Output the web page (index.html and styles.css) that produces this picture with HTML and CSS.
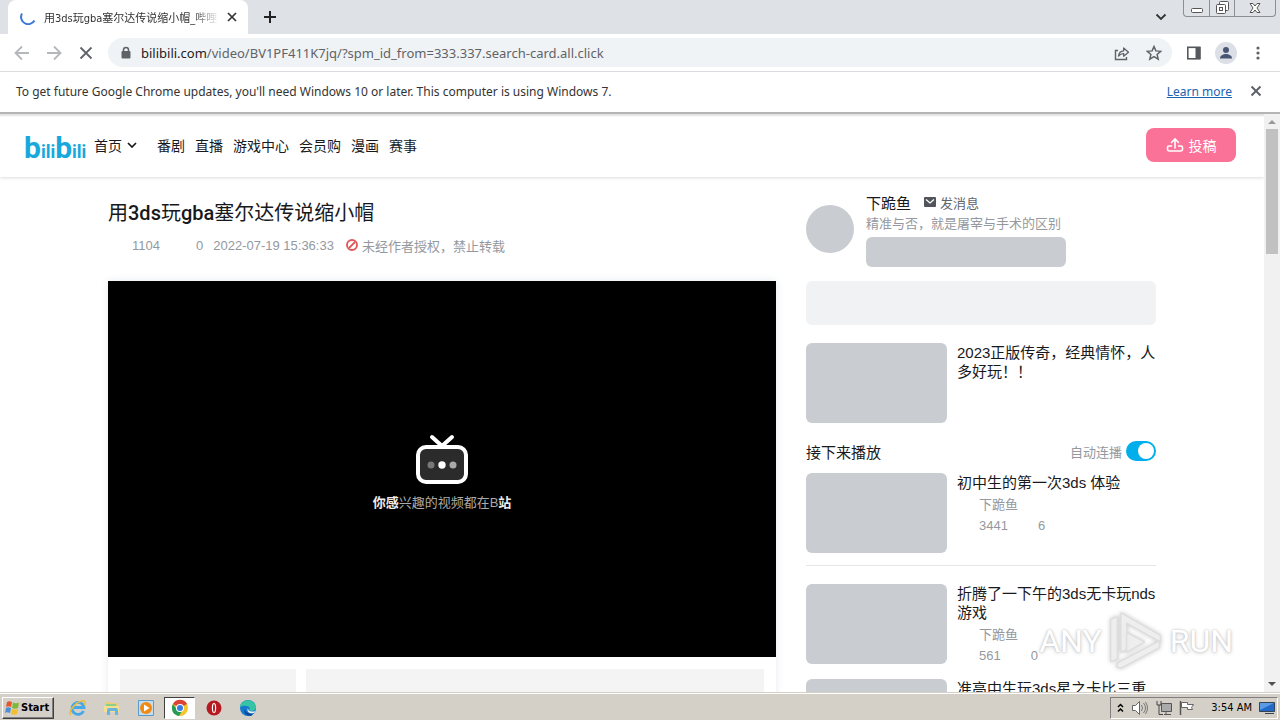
FILE: index.html
```
<!DOCTYPE html>
<html lang="zh-CN">
<head>
    <meta charset="UTF-8">
    <meta name="viewport" content="width=device-width, initial-scale=1.0">
    <title>用3ds玩gba塞尔达传说缩小帽_哔哩哔哩</title>
    <link rel="stylesheet" href="styles.css">
</head>
<body>
    <!-- Tab strip -->
    <div class="tab-strip">
        <div class="tab">
            <svg class="spinner" width="16" height="16" viewBox="0 0 16 16"><path d="M2 4.500A7 7 0 0 0 14.500 11.500" fill="none" stroke="#3b78d8" stroke-width="2"/></svg>
            <span class="tab-title">用3ds玩gba塞尔达传说缩小帽_哔哩</span>
            <button class="plain" aria-label="Close tab"><svg width="10" height="10" viewBox="0 0 10 10"><path d="M1 1l8 8M9 1l-8 8" stroke="#333" stroke-width="1.700"/></svg></button>
        </div>
        <button class="plain new-tab" aria-label="New tab"><svg width="12" height="12" viewBox="0 0 12 12"><path d="M6 0v12M0 6h12" stroke="#222" stroke-width="2"/></svg></button>
        <button class="plain tab-search" aria-label="Search tabs"><svg width="12" height="8" viewBox="0 0 12 8"><path d="M1.500 1.500L6 6l4.500-4.500" fill="none" stroke="#333" stroke-width="1.800"/></svg></button>
        <div class="window-buttons">
            <button class="plain" aria-label="Minimize"><svg width="14" height="14" viewBox="0 0 14 14"><rect x="1.500" y="7.500" width="11" height="4" rx="1" fill="#fff" stroke="#555"/></svg></button>
            <button class="plain" aria-label="Restore"><svg width="14" height="14" viewBox="0 0 14 14"><g fill="#fff" stroke="#555"><rect x="4.500" y=".5" width="9" height="9" rx="1"/><rect x="1.500" y="3.500" width="9" height="9" rx="1"/><rect x="4.500" y="6.500" width="3" height="3"/></g></svg></button>
            <button class="plain" aria-label="Close"><svg width="14" height="14" viewBox="0 0 14 14"><path d="M2 2.500h3l2 2.500 2-2.500h3L9 7l3 4.500H9L7 9l-2 2.500H2L5 7z" fill="#fff" stroke="#555"/></svg></button>
        </div>
    </div>

    <!-- Address bar -->
    <div class="toolbar">
        <button class="plain" aria-label="Back"><svg width="16" height="16" viewBox="0 0 16 16"><path d="M15 8H2M8 1.500L1.500 8 8 14.500" fill="none" stroke="#b5b7ba" stroke-width="1.800"/></svg></button>
        <button class="plain" aria-label="Forward"><svg width="16" height="16" viewBox="0 0 16 16"><path d="M1 8h13M8 1.500L14.500 8 8 14.500" fill="none" stroke="#b5b7ba" stroke-width="1.800"/></svg></button>
        <button class="plain" aria-label="Stop"><svg width="16" height="16" viewBox="0 0 16 16"><path d="M2.500 2.500l11 11M13.500 2.500l-11 11" stroke="#5f6368" stroke-width="1.800"/></svg></button>
        <div class="omnibox">
            <svg width="10" height="14" viewBox="0 0 10 14"><path d="M2.500 6V4a2.500 2.500 0 0 1 5 0v2" fill="none" stroke="#5f6368" stroke-width="1.500"/><rect x=".5" y="5" width="9" height="7.500" rx="1" fill="#5f6368"/></svg>
            <div class="url"><span>bilibili.com</span>/video/BV1PF411K7jq/?spm_id_from=333.337.search-card.all.click</div>
            <button class="plain" aria-label="Share"><svg width="16" height="16" viewBox="0 0 16 16"><path d="M4 5.500H1.500v9h11V12" fill="none" stroke="#5f6368" stroke-width="1.400"/><path d="M4.500 11c.4-3.500 2.300-5 5.200-5.200V3l4.800 4.200-4.800 4V8.700C7.500 8.600 6 9.200 4.500 11z" fill="none" stroke="#5f6368" stroke-width="1.300" stroke-linejoin="round"/></svg></button>
            <button class="plain" aria-label="Bookmark"><svg width="16" height="16" viewBox="0 0 16 16"><path d="M8 1.500l1.900 4.400 4.800.4-3.600 3.100 1.100 4.700L8 11.600l-4.200 2.500 1.100-4.700L1.300 6.300l4.800-.4z" fill="none" stroke="#5f6368" stroke-width="1.500"/></svg></button>
        </div>
        <button class="plain" aria-label="Side panel"><svg width="16" height="16" viewBox="0 0 16 16"><rect x="1.800" y="2.300" width="12" height="11.500" fill="none" stroke="#55585c" stroke-width="1.600"/><path d="M9.500 2h5v12h-5z" fill="#55585c"/></svg></button>
        <button class="plain profile" aria-label="Profile"><svg width="14" height="14" viewBox="0 0 14 14"><circle cx="7" cy="4" r="3" fill="#485674"/><path d="M1 12.500c0-6 12-6 12 0z" fill="#485674"/></svg></button>
        <button class="plain" aria-label="Menu"><svg width="4" height="16" viewBox="0 0 4 16"><g fill="#5f6368"><circle cx="2" cy="3" r="1.600"/><circle cx="2" cy="8" r="1.600"/><circle cx="2" cy="13" r="1.600"/></g></svg></button>
    </div>

    <div class="infobar">
        <span>To get future Google Chrome updates, you'll need Windows 10 or later. This computer is using Windows 7.</span>
        <a href="#">Learn more</a>
        <button class="plain" aria-label="Dismiss"><svg width="12" height="12" viewBox="0 0 12 12"><path d="M1.500 1.500l9 9M10.500 1.500l-9 9" stroke="#5f6368" stroke-width="2"/></svg></button>
    </div>

    <div class="viewport">
        <div class="page">
            <header class="site-header">
                <svg class="logo" width="62" height="32" viewBox="0 0 62 32" role="img" aria-label="bilibili"><text x="0" y="29" fill="#18a8dc"><tspan class="logo-tall">b</tspan>ili<tspan class="logo-tall">b</tspan>ili</text></svg>
                <nav>
                    <a class="home" href="#">首页 <svg width="10" height="6" viewBox="0 0 10 6"><path d="M1 1l4 4 4-4" fill="none" stroke="#18191c" stroke-width="1.700"/></svg></a>
                    <a href="#">番剧</a>
                    <a href="#">直播</a>
                    <a href="#">游戏中心</a>
                    <a href="#">会员购</a>
                    <a href="#">漫画</a>
                    <a href="#">赛事</a>
                </nav>
                <button class="upload">
                    <svg width="18" height="16" viewBox="0 0 18 16"><path d="M9 11V2.500M5.500 5.500L9 2l3.500 3.500M5.500 9H3a1.500 1.500 0 0 0-1.500 1.500v1.500A2 2 0 0 0 3.500 14h11a2 2 0 0 0 2-2v-1.500A1.500 1.500 0 0 0 15 9h-2.500" fill="none" stroke="#fff" stroke-width="1.600" stroke-linecap="round"/></svg>
                    投稿
                </button>
            </header>

            <div class="content">
                <main>
                    <h1>用<b>3ds</b>玩<b>gba</b>塞尔达传说缩小帽</h1>
                    <div class="video-meta">
                        <span class="views">1104</span>
                        <span class="comments">0</span>
                        <span class="date">2022-07-19 15:36:33</span>
                        <svg width="12" height="12" viewBox="0 0 12 12"><circle cx="6" cy="6" r="5" fill="none" stroke="#e0595c" stroke-width="1.900"/><path d="M3 9l6-6" stroke="#e0595c" stroke-width="1.800"/></svg>
                        <span>未经作者授权，禁止转载</span>
                    </div>
                    <div class="player">
                        <div class="screen">
                            <svg width="54" height="52" viewBox="0 0 54 52"><path d="M17 3l10 9L37 3" fill="none" stroke="#fff" stroke-width="4" stroke-linecap="round"/><rect x="3" y="13" width="48" height="35" rx="8" fill="#2b2b2b" stroke="#fff" stroke-width="4"/><circle cx="16" cy="31" r="3.500" fill="#777"/><circle cx="27" cy="31" r="3.700" fill="#fff"/><circle cx="38" cy="31" r="3.500" fill="#aaa"/></svg>
                            <p><b>你感</b>兴趣的视频都在B<b>站</b></p>
                        </div>
                        <div class="controls"><div class="viewers"></div><div class="danmaku-input"></div></div>
                    </div>
                </main>

                <aside>
                    <div class="author">
                        <div class="avatar"></div>
                        <div class="author-info">
                            <div class="author-name">
                                <a href="#">下跪鱼</a>
                                <a class="message" href="#"><svg width="12" height="12" viewBox="0 0 12 12"><rect y="1" width="12" height="10" rx="1" fill="#51555b"/><path d="M2 3.500l4 3.500 4-3.500" fill="none" stroke="#fff" stroke-width="1.200"/></svg>发消息</a>
                            </div>
                            <p>精准与否，就是屠宰与手术的区别</p>
                            <div class="follow"></div>
                        </div>
                    </div>
                    <div class="danmaku-list"></div>
                    <article class="card">
                        <div class="cover"></div>
                        <div><h3>2023正版传奇，经典情怀，人多好玩！！</h3></div>
                    </article>
                    <div class="next-head">
                        <h2>接下来播放</h2>
                        <label for="autoplay">自动连播</label>
                        <input class="switch" id="autoplay" type="checkbox" checked>
                    </div>
                    <article class="card first">
                        <div class="cover"></div>
                        <div>
                            <h3>初中生的第一次3ds 体验</h3>
                            <div class="card-meta">下跪鱼</div>
                            <div class="card-meta"><span>3441</span><span>6</span></div>
                        </div>
                    </article>
                    <article class="card">
                        <div class="cover"></div>
                        <div>
                            <h3>折腾了一下午的3ds无卡玩nds游戏</h3>
                            <div class="card-meta">下跪鱼</div>
                            <div class="card-meta"><span>561</span><span>0</span></div>
                        </div>
                    </article>
                    <article class="card">
                        <div class="cover"></div>
                        <div><h3>准高中生玩3ds星之卡比三重</h3></div>
                    </article>
                </aside>
            </div>
        </div>

        <div class="scrollbar">
            <svg width="8" height="4" viewBox="0 0 8 4"><path d="M0 4l4-4 4 4z" fill="#999"/></svg>
            <div class="thumb"></div>
            <svg class="down" width="8" height="4" viewBox="0 0 8 4"><path d="M0 0l4 4 4-4z" fill="#505050"/></svg>
        </div>

        <div class="watermark">
            <span>ANY</span>
            <svg width="58" height="62" viewBox="0 0 62 66"><g fill="#fff" fill-opacity=".6" stroke="#dedede" stroke-width="1.500" stroke-linejoin="round"><path d="M4 10l7-3v45l-7 3z"/><path d="M15 3l42 24v7L21 14v28l-6 3z"/><path d="M21 24l19 10-19 11z"/><path d="M12 56l44-23v7L15 62l-5-2z"/></g></svg>
            <span>RUN</span>
        </div>
    </div>

    <!-- Taskbar -->
    <footer class="taskbar">
        <button class="start">
            <svg width="16" height="16" viewBox="0 0 16 16"><path d="M3 2c2-1 3-1 5 0L7 7C5 6 4 6 2 7z" fill="#e8562a"/><path d="M9 2.500c2 1 4 1 6 0L14 8c-2 1-4 1-6 0z" fill="#7db83a"/><path d="M2 8c2-1 3-1 5 0l-1 5c-2-1-4-1-5 0z" fill="#4a8fd8"/><path d="M8 9c2 1 4 1 6 0l-1 5c-2 1-4 1-6 0z" fill="#f5bd2c"/></svg>
            Start
        </button>
        <button class="task" aria-label="Internet Explorer"><svg width="18" height="18" viewBox="0 0 18 18"><path d="M14.500 12a6 6 0 1 1 .5-3.500H5" fill="none" stroke="#45a9e8" stroke-width="2.800"/><path d="M2 16C-2 13 7 3 13 2c4-1 4 2 2 4" fill="none" stroke="#e9bd3d" stroke-width="1.500"/></svg></button>
        <button class="task" aria-label="Explorer"><svg width="18" height="18" viewBox="0 0 18 18"><path d="M2 3h5l1 1h7v9H2z" fill="#e9cf71"/><path d="M3 5h10v3H3z" fill="#8dcf88"/><path d="M1 7h15v6H1z" fill="#f5df91"/><path d="M4 16v-5q0-2 2-2h7q2 0 2 2v5h-3v-4H7v4z" fill="#68b5df"/></svg></button>
        <button class="task" aria-label="Media Player"><svg width="18" height="18" viewBox="0 0 18 18"><path d="M1.500 1.500h15v15h-15z" fill="#c4dcee" stroke="#5b9bcb"/><circle cx="9" cy="9" r="6" fill="#f18a13"/><path d="M7 5.500v7L12.500 9z" fill="#fff"/></svg></button>
        <button class="task active" aria-label="Chrome"><svg width="18" height="18" viewBox="0 0 18 18"><circle cx="9" cy="9" r="8" fill="#f7c52c"/><path d="M9 9L2 5a8 8 0 0 1 14 0z" fill="#dc4437"/><path d="M2 5a8 8 0 0 0 6 12l3.500-6H6z" fill="#249c58"/><path d="M9 5h7L14 4z" fill="#dc4437"/><circle cx="9" cy="9" r="4" fill="#fff"/><circle cx="9" cy="9" r="3" fill="#397de4"/></svg></button>
        <button class="task" aria-label="Opera"><svg width="18" height="18" viewBox="0 0 18 18"><circle cx="9" cy="9" r="7.500" fill="#b71920"/><ellipse cx="9" cy="9" rx="2.200" ry="5" fill="#fff"/><ellipse cx="9" cy="9" rx="1" ry="4" fill="#b71920"/></svg></button>
        <button class="task" aria-label="Edge"><svg width="18" height="18" viewBox="0 0 18 18"><circle cx="9" cy="9" r="8" fill="#1679cc"/><path d="M1 8c1-9 15-9 16 0 0 4-5 5-7 3 3-3-3-6-9-3z" fill="#35c4a6"/><path d="M6 10c1 5 6 5 9 4l-3 3C7 17 4 14 6 10z" fill="#0b4a9c"/><path d="M9 9c0 4 4 4 7 3l-1 2c-4 1-8-1-6-5z" fill="#e8f3f5"/></svg></button>
        <div class="tray">
            <svg width="7" height="10" viewBox="0 0 7 10"><path d="M1 4l2.500-2.500L6 4M1 8.500L3.500 6 6 8.500" fill="none" stroke="#000" stroke-width="1.500"/></svg>
            <svg width="18" height="16" viewBox="0 0 18 16"><path d="M1.500 5.500h3l4-4v13l-4-4h-3z" fill="#fff" stroke="#666"/><path d="M10.500 5q2 3 0 6M12.500 3q4 5 0 10M14.500 2q4 6 0 12" fill="none" stroke="#777"/></svg>
            <svg width="16" height="16" viewBox="0 0 16 16"><path d="M5.500 3.500h10v8h-10z" fill="#aaa" stroke="#555"/><path d="M8 14.500h7M10 12v2" stroke="#555"/><path d="M1 1v4h4V1M3 5v9.500h4" fill="none" stroke="#444"/></svg>
            <svg width="16" height="16" viewBox="0 0 16 16"><path d="M1.500 1v14" stroke="#555" stroke-width="1.500"/><path d="M2.500 2.500h6v2h6l-2 3 1 2H8.500v-2h-6z" fill="#fff" stroke="#666"/></svg>
            <time>3:54 AM</time>
            <svg width="16" height="14" viewBox="0 0 16 14"><path d="M.5 1.500h15v9H.5z" fill="#2269c9" stroke="#345"/><path d="M1 2h14L1 9z" fill="#5b9be5"/><path d="M6 12.500h9" stroke="#345"/></svg>
        </div>
    </footer>
</body>
</html>
```
FILE: styles.css
```
/* General */
* { box-sizing: border-box; }
body { margin: 0; height: 100vh; display: flex; flex-direction: column; overflow: hidden; background: #fff; font-family: "Liberation Sans", "Noto Sans CJK SC", sans-serif; color: #18191c; }
h1, h2, h3, p { margin: 0; font-weight: normal; }
a { color: inherit; text-decoration: none; }
svg { display: block; flex: none; }
button { font-family: inherit; cursor: pointer; }
.plain { display: flex; align-items: center; justify-content: center; flex: none; padding: 0; border: 0; background: none; }

/* Tab strip */
.tab-strip { display: flex; align-items: center; height: 34px; padding: 0 4px 0 8px; background: #dee1e6; font-family: "DejaVu Sans Condensed", "Noto Sans CJK SC", sans-serif; }
.tab { display: flex; align-items: center; gap: 8px; width: 240px; height: 34px; padding: 0 11px 0 12px; border-radius: 8px 8px 0 0; background: #fff; }
.tab-title { flex: 1; overflow: hidden; white-space: nowrap; font-size: 11px; color: #333; mask-image: linear-gradient(to right, #000 85%, transparent); }
.new-tab { margin-left: 16px; }
.tab-search { margin-left: auto; }
.window-buttons { display: flex; align-self: flex-start; height: 17px; margin-left: 16px; border: 1px solid #8b8e94; border-top: 0; border-radius: 0 0 4px 4px; }
.window-buttons button { width: 25px; }
.window-buttons button + button { border-left: 1px solid #8b8e94; }
.window-buttons button:last-child { width: 41px; }

/* Toolbar */
.toolbar { display: flex; align-items: center; gap: 16px; height: 38px; padding: 0 20px 0 14px; border-bottom: 1px solid #dadce0; }
.omnibox { flex: 1; display: flex; align-items: center; gap: 16px; height: 29px; margin: 0 -2px; padding: 0 10px 0 13px; border-radius: 15px; background: #f0f3f5; }
.url { flex: 1; margin-left: -6px; font-family: "Noto Sans", sans-serif; font-size: 13px; white-space: nowrap; color: #5f6368; }
.url span { color: #202124; }
.profile { width: 22px; height: 22px; margin: 0 3px 0 -3px; border-radius: 50%; background: #dcdfe5; }

/* Infobar */
.infobar { display: flex; align-items: center; height: 42px; padding: 0 18px 2px 16px; border-bottom: 2px solid #b5b5b5; font-family: "Noto Sans", sans-serif; font-size: 12px; color: #333; }
.infobar a { margin-left: auto; margin-right: 18px; color: #1a63b0; text-decoration: underline; }

/* Web page */
.viewport { position: relative; flex: 1; min-height: 0; display: flex; }
.page { flex: 1; overflow: hidden; }
.site-header { display: flex; align-items: center; height: 63px; padding: 0 28px 2px 24px; box-shadow: 0 1px 3px #dcdcdc, inset 0 4px 2px -2px #e2e2e2; }
.logo { margin-right: 8px; font-family: Roboto, sans-serif; font-size: 18px; font-weight: bold; }
.logo-tall { font-size: 30px; }
nav { display: flex; gap: 10px; font-size: 14px; }
.home { display: flex; align-items: center; gap: 5px; margin-right: 10px; }
.upload { display: flex; align-items: center; justify-content: center; gap: 5px; width: 90px; height: 34px; margin-left: auto; padding: 0; border: 0; border-radius: 8px; background: #fb7299; color: #fff; font-size: 14px; }

.content { display: flex; gap: 30px; max-width: 1048px; margin: 0 auto; }
main { flex: 1; padding-top: 22px; }
h1 { font-size: 20px; line-height: 28px; }
h1 b { font-family: Roboto, sans-serif; font-weight: 500; }
.video-meta { display: flex; align-items: center; height: 20px; margin: 8px 0 26px; padding-left: 24px; font-size: 13px; color: #9499a0; }
.video-meta svg { margin: 0 4px 0 12px; }
.comments { margin: 0 10px 0 36px; }
.player { box-shadow: 0 0 8px #e5e9ef; }
.screen { display: flex; flex-direction: column; align-items: center; justify-content: center; gap: 8px; aspect-ratio: 668 / 376; padding-top: 8px; background: #000; color: #aaa; font-size: 13px; line-height: 18px; }
.screen b { color: #eee; }
.controls { display: flex; gap: 10px; padding: 12px; }
.controls div { height: 34px; background: #f4f4f4; }
.viewers { width: 176px; }
.danmaku-input { flex: 1; }

/* Sidebar */
aside { width: 350px; padding-top: 14px; }
.author { display: flex; align-items: center; gap: 12px; height: 76px; }
.avatar { width: 48px; height: 48px; border-radius: 50%; background: #c9ccd0; }
.author-name { display: flex; align-items: center; gap: 13px; height: 22px; font-size: 15px; }
.message { display: flex; align-items: center; gap: 4px; font-size: 13px; color: #61666d; }
.author p { font-size: 13px; line-height: 22px; color: #9499a0; }
.follow { width: 200px; height: 30px; margin-top: 2px; border-radius: 6px; background: #c9ccd0; }
.danmaku-list { height: 44px; margin: 14px 0 18px; border-radius: 6px; background: #f0f2f4; }
.card { display: flex; gap: 10px; min-height: 80px; margin-bottom: 13px; }
.card.first { margin-bottom: 18px; padding-bottom: 12px; border-bottom: 1px solid #e3e5e7; }
.cover { flex: none; width: 141px; height: 80px; border-radius: 6px; background: #c9ccd0; }
h3 { margin-bottom: 2px; font-size: 15px; line-height: 19px; }
.card-meta { display: flex; gap: 30px; padding-left: 22px; font-size: 13px; line-height: 21px; color: #9499a0; }
.next-head { display: flex; align-items: center; height: 20px; margin: 18px 0 12px; }
h2 { flex: 1; font-size: 15px; }
.next-head label { font-size: 13px; color: #9499a0; }
.switch { appearance: none; display: flex; justify-content: flex-end; width: 30px; height: 20px; margin: 0 0 0 4px; padding: 2px; border-radius: 10px; background: #00aeec; }
.switch::before { content: ""; width: 16px; height: 16px; border-radius: 50%; background: #fff; }

/* Scrollbar */
.scrollbar { display: flex; flex-direction: column; align-items: center; width: 16px; padding: 6px 0; background: #f1f1f1; }
.thumb { width: 12px; height: 125px; margin-top: 5px; background: #c1c1c1; }
.down { margin-top: auto; }

/* Watermark over the page */
.watermark { position: absolute; right: 47px; bottom: 20px; display: flex; align-items: center; gap: 5px; font-family: Roboto, sans-serif; font-size: 32px; color: #fff; text-shadow: 0 0 2px #bbb, 0 1px 4px #ccc; }
.watermark svg { filter: drop-shadow(0 0 2px #bbb); }

/* Taskbar */
.taskbar { display: flex; align-items: center; height: 28px; padding: 2px 2px 0; border-top: 1px solid #d4d0c8; box-shadow: inset 0 1px #fff; background: #d4d0c8; font-family: "DejaVu Sans Condensed", sans-serif; font-size: 11px; color: #000; }
.start { display: flex; align-items: center; gap: 1px; width: 52px; height: 22px; margin-right: 8px; padding: 0 1px; border: 1px solid; border-color: #fff #404040 #404040 #fff; box-shadow: inset -1px -1px #808080; background: #d4d0c8; font-size: 11px; font-weight: bold; }
.task { display: flex; align-items: center; justify-content: center; width: 31px; height: 22px; margin-right: 3px; padding: 0; border: 0; background: none; }
.task.active { border: 1px solid; border-color: #404040 #fff #fff #404040; background: #fff; }
.tray { display: flex; align-items: center; gap: 7px; height: 22px; margin-left: auto; padding: 0 2px 0 6px; border: 1px solid; border-color: #808080 #fff #fff #808080; }
.tray time { margin-left: 9px; }
```
